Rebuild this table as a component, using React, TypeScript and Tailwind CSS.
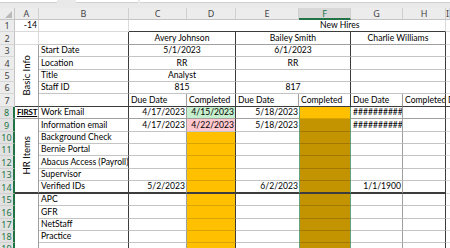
import React from "react";

type CP = { c?: string; children?: React.ReactNode };

const Cell = ({ c = "", children }: CP) => (
  <div className={`min-w-0 overflow-hidden whitespace-nowrap flex pb-px text-[8.6px] leading-[10px] text-black ${c}`}>
    {children}
  </div>
);

// alignment
const L = "items-end justify-start pl-[2px]";
const R = "items-end justify-end pr-[1px]";
const CT = "items-end justify-center";

// right borders
const rG = "border-r border-r-[#dadada]";
const rM = "border-r border-r-[#a0a0a0]";
const rD = "border-r border-r-[#3c3c3c]";
const rS = "border-r border-r-[#5fa585]";
// bottom borders
const bG = "border-b border-b-[#dadada]";
const bL = "border-b border-b-[#c4c4c4]";
const bM = "border-b border-b-[#a0a0a0]";
const bD = "border-b border-b-[#3c3c3c]";
const bH = "border-b-2 border-b-[#3c3c3c]";
const bO = "border-b border-b-[#d9a300]";
const bF = "border-b border-b-[#a07800]";

const RH = ({ n, sel }: { n: number; sel?: boolean }) => (
  <div
    className={
      sel
        ? "flex items-center justify-center text-[9px] leading-none font-['Noto_Sans',sans-serif] bg-[#e1e1e1] text-[#217346] border-r-2 border-r-[#217346] border-b border-b-[#d0d0d0]"
        : "flex items-center justify-center text-[9px] leading-none font-['Noto_Sans',sans-serif] bg-[#ececec] text-[#444444] border-r border-r-[#c4c4c4] border-b border-b-[#d6d6d6]"
    }
  >
    {n}
  </div>
);

const CH = ({ l, sel }: { l: string; sel?: boolean }) => (
  <div
    className={
      sel
        ? "flex items-center justify-center text-[9px] leading-none font-['Noto_Sans',sans-serif] bg-[#d8d8d8] text-[#217346] border-r border-r-[#d0d0d0] border-b-2 border-b-[#217346]"
        : "flex items-center justify-center text-[9px] leading-none font-['Noto_Sans',sans-serif] bg-[#ececec] text-[#444444] border-r border-r-[#d0d0d0] border-b border-b-[#c4c4c4]"
    }
  >
    {l}
  </div>
);

const SEL = "border-l border-l-[#5fa585] " + rS;
const ORANGE = "bg-[#ffc000] " + rD + " " + bO;
const DARK = "bg-[#c49400] " + SEL + " " + bF;

const hrRows: { n: number; label: string }[] = [
  { n: 10, label: "Background Check" },
  { n: 11, label: "Bernie Portal" },
  { n: 12, label: "Abacus Access (Payroll)" },
  { n: 13, label: "Supervisor" },
];

const lowRows: { n: number; label: string }[] = [
  { n: 15, label: "APC" },
  { n: 16, label: "GFR" },
  { n: 17, label: "NetStaff" },
  { n: 18, label: "Practice" },
  { n: 19, label: "" },
];

export default function App() {
  return (
    <div className="w-[450px] h-[248px] overflow-hidden bg-white font-['Lato',sans-serif]">
      {/* formula bar remnants */}
      <div className="h-[8px] bg-[#e9e9e9] flex items-start">
        <div className="w-[57px] h-[3px] bg-white border-b border-b-[#d0d0d0]" />
        <div className="ml-[19px] w-[62px] h-[3px] bg-white border-b border-b-[#d0d0d0]" />
        <div className="ml-[2px] flex-1 h-[3px] bg-white border-b border-b-[#d0d0d0]" />
      </div>
      <div className="grid grid-cols-[15px_24px_90px_58px_49px_63px_52px_52px_43px_4px] grid-rows-[12px_12px_13px_12px_13px_12px_12px_13px_12px_13px_12px_12px_13px_12px_13px_12px_13px_12px_12px_12px]">
        {/* header row */}
        <div className="relative bg-[#ececec] border-r border-r-[#c4c4c4] border-b border-b-[#c4c4c4]">
          <svg width="15" height="12" className="absolute left-0 top-0">
            <polygon points="5,10 12,3 12,10" fill="#b9b9b9" />
          </svg>
        </div>
        <CH l="A" />
        <CH l="B" />
        <CH l="C" />
        <CH l="D" />
        <CH l="E" />
        <CH l="F" sel />
        <CH l="G" />
        <CH l="H" />
        <CH l="I" />

        {/* row 1 */}
        <RH n={1} />
        <Cell c={`${R} ${rG} ${bG}`}>-14</Cell>
        <Cell c={`${rG} ${bG}`} />
        <Cell c={`col-span-6 items-end justify-start pl-[191px] ${rG} ${bD}`}>New Hires</Cell>
        <Cell c={bG} />

        {/* row 2 */}
        <RH n={2} />
        <Cell c={`${rG} ${bG}`} />
        <Cell c={`${rD} ${bL}`} />
        <Cell c={`col-span-2 ${CT} ${rD} ${bM}`}>Avery Johnson</Cell>
        <Cell c={`col-span-2 ${CT} ${rD} ${bM}`}>Bailey Smith</Cell>
        <Cell c={`col-span-2 ${CT} ${rD} ${bM}`}>Charlie Williams</Cell>
        <Cell c={bG} />

        {/* row 3 */}
        <RH n={3} />
        <Cell c={`row-span-5 items-center justify-center ${rM} ${bD}`}>
          <span className="[writing-mode:vertical-rl] rotate-180 text-[9.5px] leading-none">Basic Info</span>
        </Cell>
        <Cell c={`${L} ${rD} ${bL}`}>Start Date</Cell>
        <Cell c={`col-span-2 ${CT} ${rD} ${bL}`}>5/1/2023</Cell>
        <Cell c={`col-span-2 ${CT} ${rD} ${bL}`}>6/1/2023</Cell>
        <Cell c={`col-span-2 ${rD} ${bL}`} />
        <Cell c={bG} />

        {/* row 4 */}
        <RH n={4} />
        <Cell c={`${L} ${rD} ${bL}`}>Location</Cell>
        <Cell c={`col-span-2 ${CT} ${rD} ${bL}`}>RR</Cell>
        <Cell c={`col-span-2 ${CT} ${rD} ${bL}`}>RR</Cell>
        <Cell c={`col-span-2 ${rD} ${bL}`} />
        <Cell c={bG} />

        {/* row 5 */}
        <RH n={5} />
        <Cell c={`${L} ${rD} ${bL}`}>Title</Cell>
        <Cell c={`col-span-2 ${CT} ${rD} ${bL}`}>Analyst</Cell>
        <Cell c={`col-span-2 ${CT} ${rD} ${bL}`} />
        <Cell c={`col-span-2 ${rD} ${bL}`} />
        <Cell c={bG} />

        {/* row 6 */}
        <RH n={6} />
        <Cell c={`${L} ${rD} ${bL}`}>Staff ID</Cell>
        <Cell c={`col-span-2 ${CT} ${rD} ${bL}`}>815</Cell>
        <Cell c={`col-span-2 ${CT} ${rD} ${bL}`}>817</Cell>
        <Cell c={`col-span-2 ${rD} ${bL}`} />
        <Cell c={bG} />

        {/* row 7 */}
        <RH n={7} />
        <Cell c={`${rD} ${bD}`} />
        <Cell c={`${L} ${rM} ${bD}`}>Due Date</Cell>
        <Cell c={`${L} ${rD} ${bD}`}>Completed</Cell>
        <Cell c={`${L} ${rM} ${bD}`}>Due Date</Cell>
        <Cell c={`${L} ${rD} ${bD}`}>Completed</Cell>
        <Cell c={`${L} ${rM} ${bD}`}>Due Date</Cell>
        <Cell c={`${L} ${rD} ${bD}`}>Completed</Cell>
        <Cell c={`${L} ${bD}`}>D</Cell>

        {/* row 8 */}
        <RH n={8} sel />
        <Cell c={`${L} pl-[1px] ${rM} ${bM}`}>
          <span className="text-[8px] font-bold underline tracking-[-0.2px]">FIRST</span>
        </Cell>
        <Cell c={`${L} ${rD} ${bM}`}>Work Email</Cell>
        <Cell c={`${R} ${rM} ${bM}`}>4/17/2023</Cell>
        <Cell c={`${R} bg-[#c6efce] text-[#006100] ${rD} ${bM}`}>4/15/2023</Cell>
        <Cell c={`${R} ${bM}`}>5/18/2023</Cell>
        <Cell c={`bg-[#ffc000] ${SEL} ${bO}`} />
        <Cell c={`${L} ${rM} ${bM}`}>##########</Cell>
        <Cell c={`${rD} ${bM}`} />
        <Cell c={bG} />

        {/* row 9 */}
        <RH n={9} sel />
        <Cell c={`row-span-6 items-center justify-center ${rM} ${bH}`}>
          <span className="[writing-mode:vertical-rl] rotate-180 text-[9.5px] leading-none">HR Items</span>
        </Cell>
        <Cell c={`${L} ${rD} ${bL}`}>Information email</Cell>
        <Cell c={`${R} ${rM} ${bL}`}>4/17/2023</Cell>
        <Cell c={`${R} bg-[#ffc7ce] text-[#9c0006] ${rD} ${bL}`}>4/22/2023</Cell>
        <Cell c={`${R} ${bL}`}>5/18/2023</Cell>
        <Cell c={DARK} />
        <Cell c={`${L} ${rM} ${bL}`}>##########</Cell>
        <Cell c={`${rD} ${bL}`} />
        <Cell c={bG} />

        {/* rows 10-13 */}
        {hrRows.map((r) => (
          <React.Fragment key={r.n}>
            <RH n={r.n} sel />
            <Cell c={`${L} ${rD} ${bL}`}>{r.label}</Cell>
            <Cell c={`${R} ${rM} ${bL}`} />
            <Cell c={ORANGE} />
            <Cell c={`${R} ${bL}`} />
            <Cell c={DARK} />
            <Cell c={`${L} ${rM} ${bL}`} />
            <Cell c={`${rD} ${bL}`} />
            <Cell c={bG} />
          </React.Fragment>
        ))}

        {/* row 14 */}
        <RH n={14} sel />
        <Cell c={`${L} ${rD} ${bH}`}>Verified IDs</Cell>
        <Cell c={`${R} ${rM} ${bH}`}>5/2/2023</Cell>
        <Cell c={`bg-[#ffc000] ${rD} ${bH}`} />
        <Cell c={`${R} ${bH}`}>6/2/2023</Cell>
        <Cell c={`bg-[#c49400] ${SEL} ${bH}`} />
        <Cell c={`${R} ${rM} ${bH}`}>1/1/1900</Cell>
        <Cell c={`${rD} ${bH}`} />
        <Cell c={bG} />

        {/* rows 15-19 */}
        {lowRows.map((r, i) => (
          <React.Fragment key={r.n}>
            <RH n={r.n} sel />
            {i === 0 && <Cell c={`row-span-5 ${rM}`} />}
            <Cell c={`${L} ${rD} ${bL}`}>{r.label}</Cell>
            <Cell c={`${R} ${rM} ${bL}`} />
            <Cell c={ORANGE} />
            <Cell c={`${R} ${bL}`} />
            <Cell c={DARK} />
            <Cell c={`${L} ${rM} ${bL}`} />
            <Cell c={`${rD} ${bL}`} />
            <Cell c={bG} />
          </React.Fragment>
        ))}
      </div>
    </div>
  );
}
